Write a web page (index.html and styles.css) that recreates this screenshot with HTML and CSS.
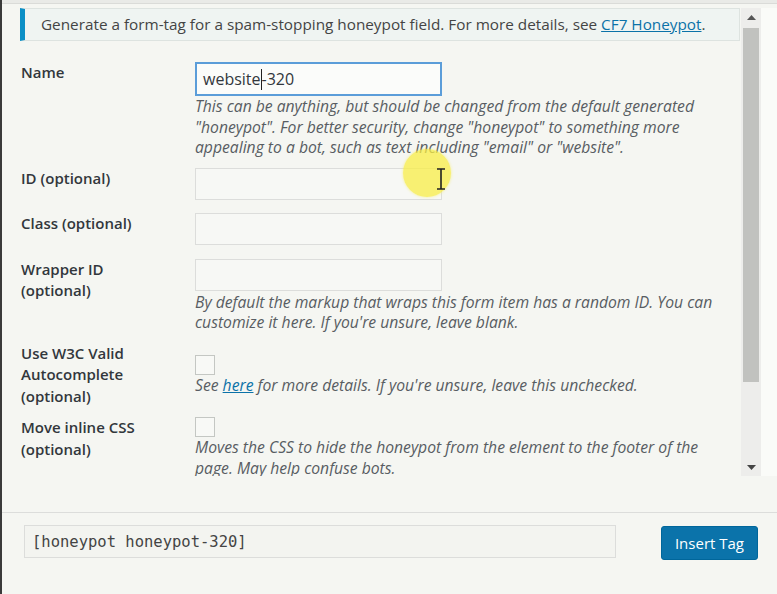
FILE: index.html
```html
<!DOCTYPE html>
<html lang="en">
<head>
    <meta charset="UTF-8">
    <meta name="viewport" content="width=device-width, initial-scale=1.0">
    <title>Honeypot form-tag generator</title>
    <link rel="stylesheet" href="styles.css">
</head>
<body>
    <div class="frame">
        <div class="topbar"></div>
        <div class="scroll">
            <div class="content">
                <div class="notice">Generate a form-tag for a spam-stopping honeypot field. For more details, see <a href="#">CF7 Honeypot</a>.</div>

                <div class="row first">
                    <div class="label">Name</div>
                    <div class="field">
                        <div class="input focused">website<span class="caret"></span>-320</div>
                        <p class="desc">This can be anything, but should be changed from the default generated "honeypot". For better security, change "honeypot" to something more appealing to a bot, such as text including "email" or "website".</p>
                    </div>
                </div>

                <div class="row">
                    <div class="label">ID (optional)</div>
                    <div class="field">
                        <input type="text" class="input">
                    </div>
                </div>

                <div class="row spaced">
                    <div class="label">Class (optional)</div>
                    <div class="field">
                        <input type="text" class="input">
                    </div>
                </div>

                <div class="row spaced wrapper">
                    <div class="label">Wrapper ID<br>(optional)</div>
                    <div class="field">
                        <input type="text" class="input">
                        <p class="desc">By default the markup that wraps this form item has a random ID. You can customize it here. If you're unsure, leave blank.</p>
                    </div>
                </div>

                <div class="row">
                    <div class="label">Use W3C Valid<br>Autocomplete<br>(optional)</div>
                    <div class="field">
                        <span class="check check-w3c"></span>
                        <p class="desc">See <a href="#">here</a> for more details. If you're unsure, leave this unchecked.</p>
                    </div>
                </div>

                <div class="row">
                    <div class="label">Move inline CSS<br>(optional)</div>
                    <div class="field">
                        <span class="check"></span>
                        <p class="desc">Moves the CSS to hide the honeypot from the element to the footer of the page. May help confuse bots.</p>
                    </div>
                </div>

                <!-- mouse highlight from the screen recording -->
                <div class="pointer">
                    <svg width="12" height="22" viewBox="0 0 12 22">
                        <path d="M2 1h8M6 1v20M2 21h8" stroke="#222" stroke-width="1.6" fill="none"/>
                    </svg>
                </div>
            </div>
            <div class="scrollbar">
                <div class="arrow">
                    <svg width="9" height="5" viewBox="0 0 9 5"><path d="M0 5L4.5 0L9 5Z" fill="#555"/></svg>
                </div>
                <div class="track"><div class="thumb"></div></div>
                <div class="arrow">
                    <svg width="9" height="5" viewBox="0 0 9 5"><path d="M0 0L4.5 5L9 0Z" fill="#444"/></svg>
                </div>
            </div>
            <div class="edge"></div>
        </div>
        <div class="footer">
            <input type="text" class="tag" value="[honeypot honeypot-320]" readonly>
            <button class="insert">Insert Tag</button>
        </div>
    </div>
</body>
</html>
```

FILE: styles.css
```css
body {
    margin: 0;
    background: #f5f6f2;
    font-family: "Open Sans", "Noto Sans", sans-serif;
    font-size: 15px;
    color: #32373c;
}
.frame {
    width: 775px;
    height: 594px;
    border-left: 2px solid #3a3a3a;
    display: flex;
    flex-direction: column;
    overflow: hidden;
}
.topbar {
    height: 3px;
    background: #e9eae7;
    border-bottom: 1px solid #dadbd8;
}
.scroll {
    display: flex;
    height: 468px;
    margin-top: 4px;
}
.content {
    flex: 1;
    position: relative;
    overflow: hidden;
    padding: 0 1px 0 18px;
}
.notice {
    background: #eff4f2;
    border: 1px solid #dde3e0;
    border-left: 5px solid #0b8fc6;
    padding: 6px 12px 6px 16px;
    font-size: 15.3px;
    line-height: 19px;
    color: #444;
}
a {
    color: #0b72a8;
}
.row {
    display: grid;
    grid-template-columns: 175px 1fr;
    margin-top: 10px;
}
.row.first {
    margin-top: 21px;
}
.row.spaced {
    margin-top: 13px;
}
.row.wrapper {
    margin-top: 14px;
}
.wrapper .desc {
    margin-top: 1px;
}
.label {
    font-weight: 600;
    line-height: 21.5px;
    padding-left: 1px;
    color: #32373c;
}
.field {
    padding-right: 20px;
}
.input {
    display: block;
    box-sizing: border-box;
    width: 247px;
    height: 32px;
    margin: 0;
    padding: 0 6px;
    border: 1px solid #dcdddb;
    background: #f7f8f5;
    font-family: inherit;
    font-size: 16px;
    line-height: 30px;
    color: #32373c;
}
.focused {
    height: 34px;
    border: 2px solid #5b9dd9;
    background: #fbfcfa;
    line-height: 30px;
    padding-left: 6px;
}
.caret {
    display: inline-block;
    width: 1px;
    height: 21px;
    background: #222;
    vertical-align: -5px;
}
.desc {
    margin: 0;
    font-size: 15.7px;
    font-style: italic;
    line-height: 20.5px;
    color: #585d62;
}
.check {
    display: block;
    width: 18px;
    height: 18px;
    border: 1px solid #c4c7c3;
    background: #f8f9f6;
}
.check-w3c {
    margin-top: 12px;
}
.pointer {
    position: absolute;
    left: 401px;
    top: 141px;
    width: 48px;
    height: 48px;
    border-radius: 50%;
    background: rgba(248, 238, 70, 0.75);
    box-shadow: 0 0 3px rgba(248, 238, 70, 0.6);
}
.pointer svg {
    position: absolute;
    left: 32px;
    top: 19px;
}
.scrollbar {
    width: 20px;
    background: #ededeb;
    display: flex;
    flex-direction: column;
}
.arrow {
    height: 18px;
    display: flex;
    align-items: center;
    justify-content: center;
}
.track {
    flex: 1;
    padding: 2px 2px 0 2px;
}
.thumb {
    height: 354px;
    background: #c1c2bf;
}
.edge {
    width: 16px;
    background: #fafbf8;
}
.footer {
    margin-top: 36px;
    border-top: 1px solid #dcdddb;
    padding: 12px 19px 0 22px;
    display: flex;
    align-items: flex-start;
    justify-content: space-between;
}
.tag {
    box-sizing: border-box;
    width: 592px;
    height: 33px;
    padding: 0 7px;
    border: 1px solid #dcdddb;
    background: #f3f4f0;
    font-family: "DejaVu Sans Mono", monospace;
    font-size: 15.5px;
    color: #444;
}
.insert {
    margin-top: 1px;
    height: 34px;
    padding: 0 13px;
    border: 1px solid #00669b;
    border-radius: 3px;
    background: #0b73aa;
    color: #fff;
    font-family: inherit;
    font-size: 15px;
}
```
